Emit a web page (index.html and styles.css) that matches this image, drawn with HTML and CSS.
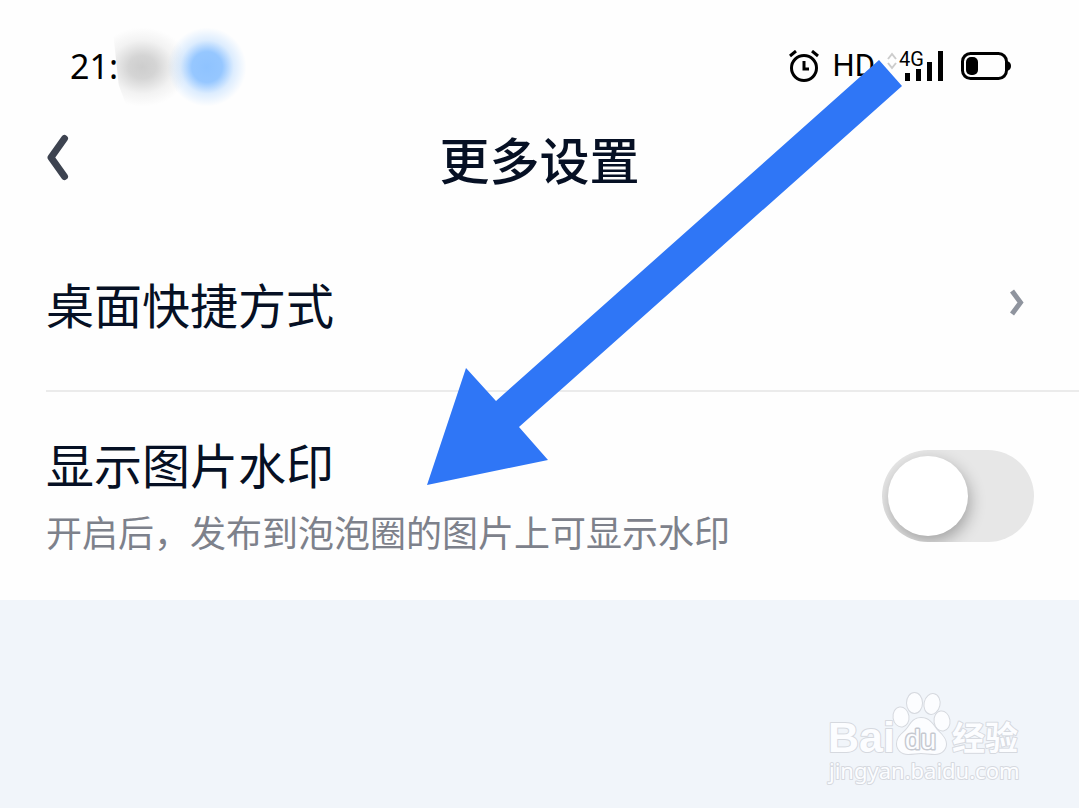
FILE: index.html
```html
<!DOCTYPE html>
<html lang="zh-CN">
<head>
    <meta charset="UTF-8">
    <meta name="viewport" content="width=device-width, initial-scale=1.0">
    <title>更多设置</title>
    <link rel="stylesheet" href="styles.css">
</head>
<body>
    <div class="status-bar">
        <div class="clock">21:<span class="smudge smudge-gray"></span><span class="smudge smudge-blue"></span></div>
        <div class="status-icons">
            <svg class="alarm" width="30" height="32" viewBox="0 0 30 32" fill="none" stroke="#000" stroke-width="3">
                <circle cx="15" cy="18" r="12.5"/>
                <path d="M15 11v8h5M1 6l6-5M29 6l-6-5"/>
            </svg>
            <span class="hd">HD</span>
            <svg class="signal" width="56" height="34" viewBox="0 0 56 34">
                <path d="M1 10l4-5 4 5M1 14l4 5 4-5" fill="none" stroke="#ccc" stroke-width="2"/>
                <text x="12" y="17" class="network">4G</text>
                <path d="M20.5 32v-8M31.500 32V20M42.500 32V13M53.500 32V2" fill="none" stroke="#000" stroke-width="5"/>
            </svg>
            <svg class="battery" width="50" height="28" viewBox="0 0 50 28">
                <rect x="1.5" y="1.5" width="44" height="25" rx="8" fill="none" stroke="#000" stroke-width="3"/>
                <rect x="5" y="5" width="12" height="18" rx="5"/>
                <path d="M46 9q4 1 4 5t-4 5z"/>
            </svg>
        </div>
    </div>

    <header class="nav">
        <button class="back" type="button" aria-label="返回">
            <svg width="24" height="48" viewBox="0 0 24 48" fill="none" stroke="#3d4350" stroke-width="7" stroke-linecap="round" stroke-linejoin="round">
                <path d="M18.5 4.500L5 23.500l13.500 19"/>
            </svg>
        </button>
        <h1>更多设置</h1>
    </header>

    <main class="settings">
        <a class="row row-link" href="#">
            <span class="row-title">桌面快捷方式</span>
            <svg width="16" height="28" viewBox="0 0 16 28" fill="none" stroke="#8f949e" stroke-width="5" stroke-linecap="square">
                <path d="M4.5 4l7 9.500-7 9.500"/>
            </svg>
        </a>
        <div class="row row-switch">
            <label for="watermark-switch">
                <span class="row-title">显示图片水印</span>
                <span class="row-desc">开启后，发布到泡泡圈的图片上可显示水印</span>
            </label>
            <input type="checkbox" class="switch" id="watermark-switch">
        </div>
    </main>

    <footer class="page-end">
        <svg class="brand" width="200" height="100" viewBox="0 0 200 100">
            <g class="brand-shape">
                <text x="3" y="60" class="brand-name">Bai</text>
                <ellipse cx="76" cy="25" rx="7.5" ry="9.5" transform="rotate(-8 76 25)"/>
                <ellipse cx="89.5" cy="11" rx="7.5" ry="10"/>
                <ellipse cx="107" cy="12" rx="7.5" ry="10" transform="rotate(12 107 12)"/>
                <ellipse cx="117" cy="29" rx="7.5" ry="9.5" transform="rotate(-8 117 29)"/>
                <path d="M96 26c-9 0-11 8-15 12-4 4-9 7-9 14 0 6 5 10 11 10 5 0 9-1 13-1s9 1 14 1c6 0 11-4 11-10s-5-10-9-14c-4-5-7-12-16-12z"/>
                <text x="80" y="57" class="brand-du">du</text>
                <text x="127" y="58" class="brand-cn">经验</text>
                <text x="4" y="87" class="brand-url">jingyan.baidu.com</text>
            </g>
        </svg>
    </footer>

    <!-- pointer to the watermark option -->
    <svg class="arrow" width="476" height="426" viewBox="0 0 476 426">
        <path d="M0 425L39 308l30 33L452 0l23 26L92 367l29 33z"/>
    </svg>
</body>
</html>
```
FILE: styles.css
```css
* {
    margin: 0;
    padding: 0;
    box-sizing: border-box;
}

body {
    position: relative;
    display: flex;
    flex-direction: column;
    min-height: 100vh;
    background: #fefefe;
    color: #061024;
    font-family: "Noto Sans CJK SC", sans-serif;
    overflow-x: hidden;
}

.status-bar {
    display: flex;
    justify-content: space-between;
    align-items: center;
    height: 100px;
    padding: 32px 68px 0 70px;
    color: #000;
}

.clock {
    position: relative;
    font-family: "Noto Sans", sans-serif;
    font-size: 34px;
    line-height: 48px;
}

.smudge {
    position: absolute;
}

.smudge-gray {
    left: 42px;
    top: -20px;
    width: 84px;
    height: 90px;
    background: radial-gradient(ellipse at 36% 50%, #cdcdcd 0, rgba(205, 205, 205, 0.85) 18%, rgba(215, 215, 215, 0.3) 42%, rgba(220, 220, 220, 0) 62%);
    clip-path: polygon(0 0, 100% 0, 100% 100%, 20% 100%, 8% 70%);
}

.smudge-blue {
    left: 92px;
    top: -20px;
    width: 90px;
    height: 90px;
    background: radial-gradient(circle, #8fc3ff 0, #96c7ff 24%, rgba(170, 210, 255, 0.4) 42%, rgba(190, 220, 255, 0) 62%);
}

.status-icons {
    display: flex;
    align-items: center;
}

.hd {
    margin: 0 12px 0 14px;
    font-family: Roboto, sans-serif;
    font-size: 31px;
    line-height: 36px;
}

.network {
    font-family: Roboto, sans-serif;
    font-size: 20px;
}

.battery {
    margin-left: 18px;
}

.nav {
    display: grid;
    grid-template-columns: 48px 1fr 48px;
    align-items: center;
    height: 116px;
    padding: 0 46px;
}

.back {
    display: flex;
    height: 48px;
    border: none;
    background: none;
    cursor: pointer;
}

.nav h1 {
    text-align: center;
    font-size: 50px;
    line-height: 64px;
    font-weight: 500;
}

.row {
    display: flex;
    justify-content: space-between;
    align-items: center;
}

.row-link {
    height: 176px;
    margin-left: 46px;
    padding-right: 54px;
    border-bottom: 2px solid #ebebeb;
    color: inherit;
    text-decoration: none;
}

.row-title {
    display: block;
    font-size: 48px;
    line-height: 64px;
}

.row-switch {
    height: 208px;
    padding: 0 45px 0 46px;
}

.row-desc {
    display: block;
    margin-top: 6px;
    color: #7d818b;
    font-size: 36px;
    line-height: 60px;
}

.switch {
    appearance: none;
    flex: none;
    width: 152px;
    height: 92px;
    padding: 6px;
    border-radius: 46px;
    background: #e7e7e7;
    overflow: hidden;
    cursor: pointer;
}

.switch::before {
    content: "";
    display: block;
    width: 80px;
    height: 80px;
    border-radius: 50%;
    background: #fff;
    box-shadow: 2px 6px 16px rgba(0, 0, 0, 0.3);
}

.switch:checked {
    background: #2f76f6;
}

.switch:checked::before {
    margin-left: auto;
}

.page-end {
    display: flex;
    flex: 1;
    justify-content: flex-end;
    align-items: flex-end;
    padding: 16px 54px 16px 46px;
    background: #f1f5fa;
}

.brand-shape {
    fill: #fcfdff;
    stroke: #d6d9df;
    stroke-width: 2px;
    stroke-linejoin: round;
    paint-order: stroke;
}

.brand-name {
    font: bold 43px "Liberation Sans", sans-serif;
}

.brand-du {
    font: 28px "Liberation Sans", sans-serif;
    stroke: #c6c9d0;
    stroke-width: 3px;
}

.brand-cn {
    font: bold 33px "Noto Sans CJK SC", sans-serif;
}

.brand-url {
    font: 22px "Noto Sans", sans-serif;
}

.arrow {
    position: absolute;
    left: 427px;
    top: 60px;
    fill: #2f76f6;
    pointer-events: none;
}
```
